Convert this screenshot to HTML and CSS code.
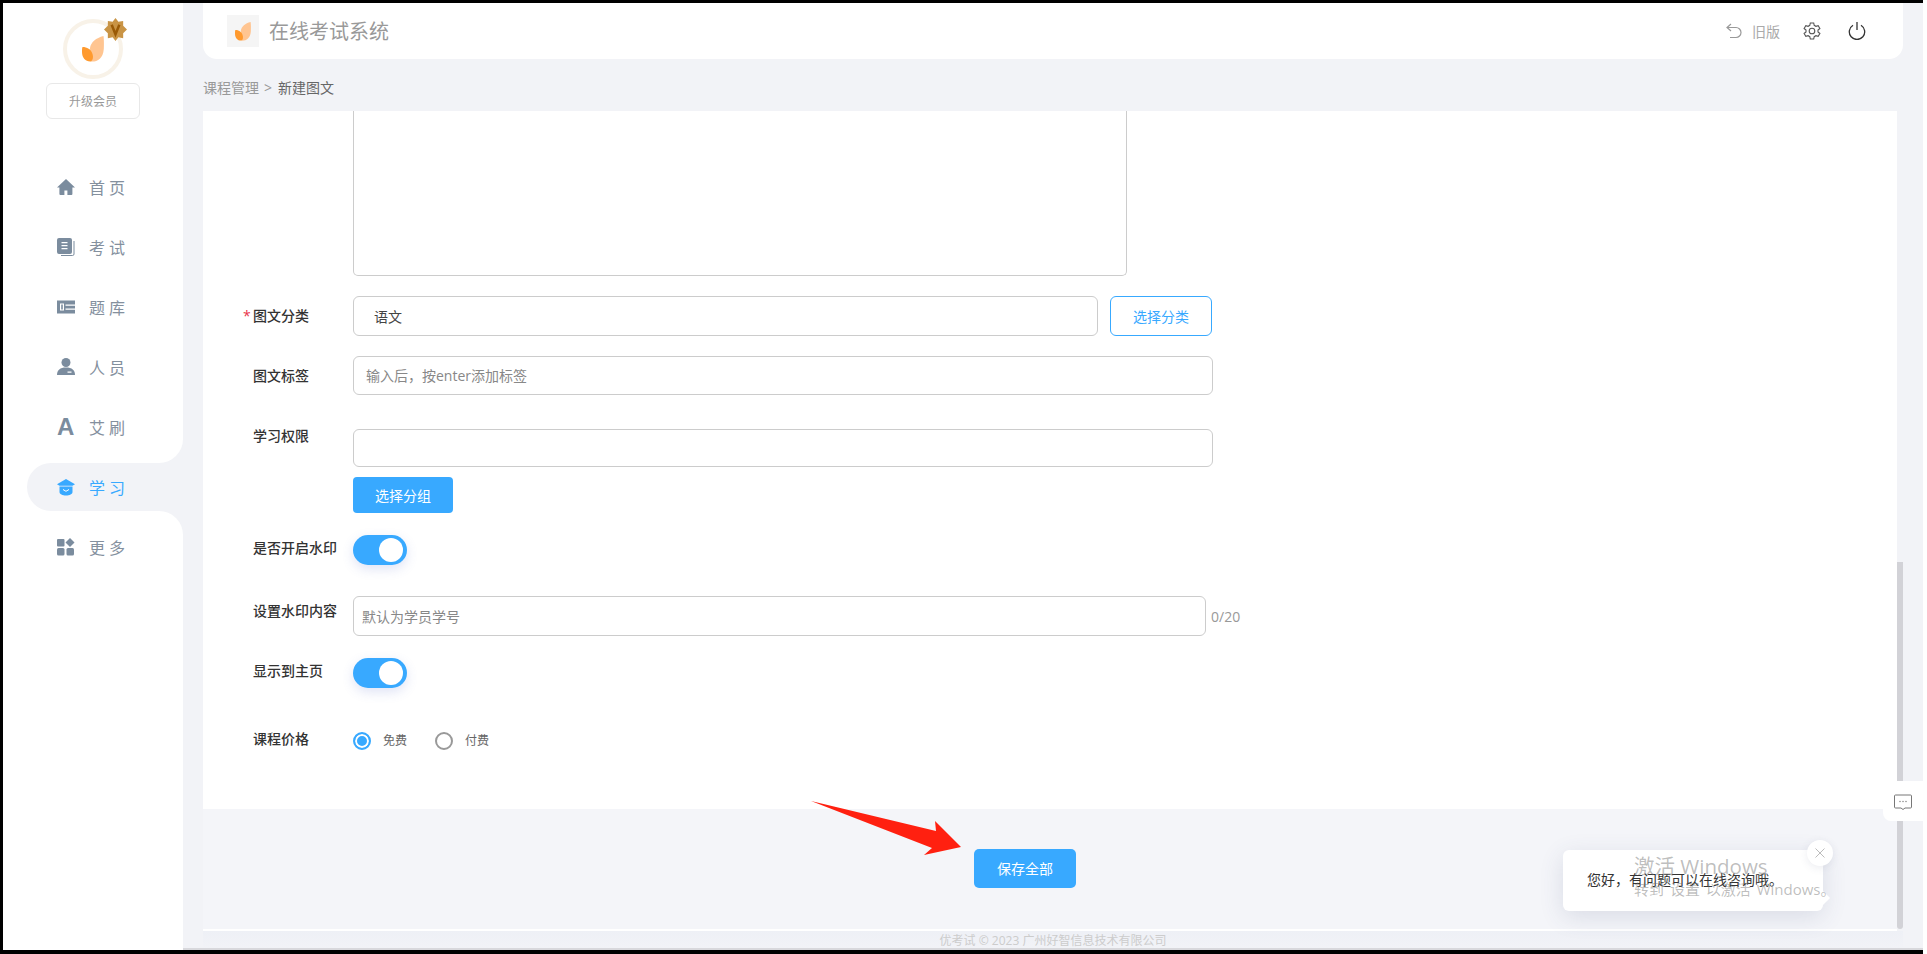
FILE: index.html
```html
<!DOCTYPE html>
<html lang="zh-CN">
<head>
  <meta charset="UTF-8" />
  <meta name="viewport" content="width=device-width, initial-scale=1.0"/>
  <title>在线考试系统 - 新建图文</title>
  <link rel="stylesheet" href="styles.css">
</head>
<body>
<div class="app">

  <aside class="sidebar">
    <div class="side-top">
      <div class="avatar">
        <svg class="leaf-logo" width="22" height="26" viewBox="0 0 22 26">
          <path d="M21.500 0C14 2 9 6 8 12c0 5 2 10 1 13.500 6 .5 12-2.500 12.800-12.500.2-5 .2-9-.3-13z" fill="#ffc591"/>
          <path d="M.5 11c4.500 0 8.500 2 10 7 1 3 .5 6-1.500 7.500-5 .5-9-3.500-9-9.500 0-2 0-4 .5-5z" fill="#ff9a2e"/>
        </svg>
        <svg class="badge" width="23" height="23" viewBox="0 0 24 24">
          <polygon points="12,0 15,4 20,3 20,8 24,12 20,16 20,21 15,20 12,24 9,20 4,21 4,16 0,12 4,8 4,3 9,4" fill="#c99445"/>
          <polyline points="8,7 12,17 16,7" fill="none" stroke="#9a5a06" stroke-width="2.600"/>
        </svg>
      </div>
      <div class="upgrade">升级会员</div>
      <ul class="nav">
        <li class="nav-item">
          <svg class="nav-icon" viewBox="0 0 18 18"><path d="M9 1L0 9.500h2.400V16a1 1 0 0 0 1 1h4v-4.500h3V17h4a1 1 0 0 0 1-1V9.500H18z"/></svg>
          <span>首页</span>
        </li>
        <li class="nav-item">
          <svg class="nav-icon" viewBox="0 0 18 18"><path d="M2 0h11a2 2 0 0 1 2 2v12a2 2 0 0 1-2 2H2a2 2 0 0 1-2-2V2a2 2 0 0 1 2-2zm2.500 4v1.300h6V4zm0 3v1.300h6V7zm0 3v1.300h6V10z" fill-rule="evenodd"/><path d="M17 3v13a1.500 1.500 0 0 1-1.500 1.500H4" fill="none" stroke="#7b8c9e" stroke-width="1"/></svg>
          <span>考试</span>
        </li>
        <li class="nav-item">
          <svg class="nav-icon" viewBox="0 0 18 18"><path d="M0 2.500h18v13H0zm3 3v7h4v-7zm5.500 1v1.200H18V6.500zm0 4V11.700H18v-1.200z" fill-rule="evenodd"/><rect x="4.200" y="6.500" width="1.600" height="5"/></svg>
          <span>题库</span>
        </li>
        <li class="nav-item">
          <svg class="nav-icon" viewBox="0 0 18 18"><circle cx="9" cy="4.500" r="4.500"/><path d="M0 17c0-5 3-7.500 9-7.500s9 2.500 9 7.500zm10.500-3.500v1.200h4v-1.200z" fill-rule="evenodd"/></svg>
          <span>人员</span>
        </li>
        <li class="nav-item">
          <span class="nav-glyph">A</span>
          <span>艾刷</span>
        </li>
      </ul>
    </div>
    <div class="side-active">
      <div class="nav-item active">
        <svg class="nav-icon" viewBox="0 0 18 18"><path d="M9 1L0 6.200l2.500 1.500h13L18 6.200z"/><path d="M2.500 8.500V14c0 2 3 3.500 6.500 3.500s6.500-1.500 6.500-3.500V8.500z"/><path d="M6 11.500l3 1.800 3-1.800" fill="none" stroke="#fff" stroke-width="1"/></svg>
        <span>学习</span>
      </div>
    </div>
    <div class="side-bottom">
      <div class="nav-item">
        <svg class="nav-icon" viewBox="0 0 18 18"><rect x="0" y="1" width="7.500" height="7.500" rx="1"/><rect x="0" y="10" width="7.500" height="7.500" rx="1.500"/><rect x="9.500" y="10" width="7.500" height="7.500" rx="1.500"/><polygon points="13,0 17.500,4.500 13,9 8.500,4.500"/></svg>
        <span>更多</span>
      </div>
    </div>
  </aside>

  <main class="main">
    <header class="topbar">
      <div class="brand-logo">
        <svg width="16" height="19" viewBox="0 0 22 26">
          <path d="M21.500 0C14 2 9 6 8 12c0 5 2 10 1 13.500 6 .5 12-2.500 12.800-12.500.2-5 .2-9-.3-13z" fill="#ffc591"/>
          <path d="M.5 11c4.500 0 8.500 2 10 7 1 3 .5 6-1.500 7.500-5 .5-9-3.500-9-9.500 0-2 0-4 .5-5z" fill="#ff9a2e"/>
        </svg>
      </div>
      <div class="brand-name">在线考试系统</div>
      <div class="top-actions">
        <svg class="back-icon" width="16" height="16" viewBox="0 0 16 16"><path d="M5 1L1 4.500 5 8M1.500 4.500H10a5 5 0 0 1 0 10H4" fill="none" stroke="#999" stroke-width="1.200"/></svg>
        <span class="old-version">旧版</span>
        <svg class="gear-icon" width="18" height="18" viewBox="0 0 18 18" fill="none" stroke="#555" stroke-width="1.100"><path d="M7.300 1h3.400l.5 2.300 1.700 1 2.300-.7 1.700 2.900L15 8v2l1.900 1.500-1.700 2.900-2.300-.7-1.700 1-.5 2.300H7.300l-.5-2.300-1.700-1-2.300.7-1.700-2.900L3 10V8L1.100 6.500l1.700-2.900 2.300.7 1.700-1z"/><circle cx="9" cy="9" r="2.800"/></svg>
        <svg class="power-icon" width="18" height="18" viewBox="0 0 18 18" fill="none" stroke="#333" stroke-width="1.300"><path d="M5 3.200a7.700 7.700 0 1 0 8 0M9 0v8"/></svg>
      </div>
    </header>

    <div class="breadcrumb">
      <span class="crumb-parent">课程管理</span>
      <span class="crumb-sep">&gt;</span>
      <span class="crumb-current">新建图文</span>
    </div>

    <div class="content">
      <div class="pane">
        <form class="card">
          <div class="form-row intro-row">
            <div class="form-label"></div>
            <div class="textarea-box"></div>
          </div>

          <div class="form-row cat-row">
            <div class="form-label"><i class="required">*</i>图文分类</div>
            <div class="field cat-field"><span class="field-value">语文</span></div>
            <button type="button" class="btn-outline">选择分类</button>
          </div>

          <div class="form-row tag-row">
            <div class="form-label">图文标签</div>
            <div class="field wide"><span class="placeholder">输入后，按enter添加标签</span></div>
          </div>

          <div class="form-row perm-row">
            <div class="form-label up">学习权限</div>
            <div class="perm-col">
              <div class="field wide perm-field"></div>
              <button type="button" class="btn-primary group-btn">选择分组</button>
            </div>
          </div>

          <div class="form-row switch-row first-switch">
            <div class="form-label lift">是否开启水印</div>
            <div class="switch"><span class="knob"></span></div>
          </div>

          <div class="form-row mark-row">
            <div class="form-label lift-more">设置水印内容</div>
            <div class="field mark-field"><span class="placeholder">默认为学员学号</span></div>
            <span class="counter">0/20</span>
          </div>

          <div class="form-row switch-row second-switch">
            <div class="form-label lift">显示到主页</div>
            <div class="switch"><span class="knob"></span></div>
          </div>

          <div class="form-row price-row">
            <div class="form-label lift">课程价格</div>
            <span class="radio checked"></span><span class="radio-text">免费</span>
            <span class="radio"></span><span class="radio-text">付费</span>
          </div>
        </form>

        <div class="save-area">
          <button type="button" class="btn-primary save-btn">保存全部</button>
        </div>
      </div>
      <div class="scrollbar"><div class="thumb"></div></div>
    </div>

    <footer class="footer">优考试 © 2023 广州好智信息技术有限公司</footer>
  </main>

  <!-- annotation arrow from the screenshot -->
  <svg class="arrow" width="156" height="60" viewBox="0 0 156 60">
    <polygon points="0,0 125,30 124,20 150,46 113,54 121,47" fill="#ff2010"/>
  </svg>

  <div class="chat-tab">
    <svg width="18" height="17" viewBox="0 0 18 17"><path d="M1.500 1h15a1 1 0 0 1 1 1v11a1 1 0 0 1-1 1H11l-2 1.500L7 14H1.500a1 1 0 0 1-1-1V2a1 1 0 0 1 1-1z" fill="none" stroke="#777" stroke-width="1"/><circle cx="6" cy="7.500" r=".7" fill="#777"/><circle cx="9" cy="7.500" r=".7" fill="#777"/><circle cx="12" cy="7.500" r=".7" fill="#777"/></svg>
  </div>

  <div class="chat-tip">
    您好，有问题可以在线咨询哦。
    <span class="tip-close">
      <svg width="10" height="10" viewBox="0 0 10 10"><path d="M.5.500l9 9M9.500.500l-9 9" stroke="#bbb" stroke-width="1" fill="none"/></svg>
    </span>
  </div>

  <div class="activate">
    <div class="activate-title">激活 Windows</div>
    <div class="activate-sub">转到 设置 以激活 Windows。</div>
  </div>
</div>
</body>
</html>
```

FILE: styles.css
```css
* {
  box-sizing: border-box;
}

html, body {
  height: 100%;
}

body {
  margin: 0;
  background: #fff;
  padding-right: 4px;
  overflow: hidden;
  font-family: "Open Sans", "Noto Sans CJK SC", sans-serif;
  font-size: 14px;
  color: #333;
}

.app {
  display: flex;
  height: 100%;
  background: #f2f3f7;
  border: solid #000;
  border-width: 3px 0 4px 3px;
}

/* sidebar */
.sidebar {
  width: 180px;
  flex-shrink: 0;
  display: flex;
  flex-direction: column;
  background: #f2f3f7;
}

.side-top {
  background: #fff;
  height: 460px;
  border-bottom-right-radius: 24px;
  display: flex;
  flex-direction: column;
  align-items: center;
  padding-top: 16px;
}

.avatar {
  position: relative;
  width: 60px;
  height: 60px;
  flex-shrink: 0;
  border: 4px solid #f8f2e8;
  border-radius: 50%;
  display: flex;
  align-items: center;
  justify-content: center;
}

.badge {
  position: absolute;
  top: -5px;
  right: -8px;
}

.upgrade {
  width: 94px;
  height: 36px;
  margin-top: 4px;
  border: 1px solid #e8e8e8;
  border-radius: 6px;
  font-size: 12px;
  color: #999;
  display: flex;
  align-items: center;
  justify-content: center;
}

.nav {
  list-style: none;
  margin: 38px 0 0;
  padding: 0;
  width: 100%;
}

.nav-item {
  height: 60px;
  display: flex;
  align-items: center;
  padding: 0 0 1px 54px;
  font-size: 16px;
  letter-spacing: 4px;
  color: #84909e;
}

.nav-icon {
  width: 18px;
  height: 18px;
  margin-right: 14px;
  fill: #7b8c9e;
  flex-shrink: 0;
}

.nav-glyph {
  width: 18px;
  margin-right: 14px;
  font-family: "Liberation Sans", sans-serif;
  font-size: 24px;
  font-weight: bold;
  line-height: 18px;
  letter-spacing: 0;
  color: #7b8c9e;
}

.side-active {
  background: #fff;
  height: 48px;
  padding-left: 24px;
}

.nav-item.active {
  height: 48px;
  padding-left: 30px;
  background: #f2f3f7;
  border-radius: 24px 0 0 24px;
  color: #38a9ff;
}

.nav-item.active .nav-icon {
  fill: #38a9ff;
}

.side-bottom {
  flex: 1;
  background: #fff;
  border-top-right-radius: 24px;
  padding-top: 6px;
}

/* main column */
.main {
  flex: 1;
  min-width: 0;
  display: flex;
  flex-direction: column;
  padding: 0 20px 0 20px;
  position: relative;
}

.main::after {
  content: "";
  position: absolute;
  left: 0;
  right: 0;
  bottom: 0;
  height: 2px;
  background: #d8d8dc;
}

.topbar {
  height: 56px;
  flex-shrink: 0;
  display: flex;
  align-items: center;
  background: #fff;
  border-radius: 0 0 14px 14px;
  padding: 0 37px 0 24px;
}

.brand-logo {
  width: 32px;
  height: 32px;
  background: #f5f5f5;
  display: flex;
  align-items: center;
  justify-content: center;
}

.brand-name {
  margin-left: 10px;
  padding-bottom: 2px;
  font-size: 20px;
  color: #999;
}

.top-actions {
  margin-left: auto;
  display: flex;
  align-items: center;
}

.old-version {
  margin-left: 10px;
  color: #aaa;
}

.gear-icon {
  margin-left: 23px;
}

.power-icon {
  margin-left: 27px;
}

.breadcrumb {
  height: 52px;
  flex-shrink: 0;
  display: flex;
  align-items: center;
  padding-top: 4px;
  color: #999;
}

.crumb-sep {
  margin: 0 6px 0 5px;
}

.crumb-current {
  color: #666;
}

.content {
  flex: 1;
  min-height: 0;
  display: flex;
}

.pane {
  flex: 1;
  min-width: 0;
  display: flex;
  flex-direction: column;
}

.card {
  height: 698px;
  flex-shrink: 0;
  background: #fff;
  padding-left: 50px;
}

.form-row {
  display: flex;
  align-items: center;
}

.form-label {
  width: 100px;
  flex-shrink: 0;
  line-height: 20px;
  font-weight: 500;
  color: #333;
}

.form-label.lift {
  padding-bottom: 4px;
}

.form-label.lift-more {
  padding-bottom: 10px;
}

.form-label.up {
  align-self: flex-start;
  margin-top: -3px;
}

.required {
  display: inline-block;
  width: 10px;
  margin-left: -10px;
  font-style: normal;
  color: #e8354a;
}

.textarea-box {
  width: 774px;
  height: 165px;
  border: 1px solid #ccc;
  border-top: none;
  border-radius: 0 0 5px 5px;
}

.field {
  height: 40px;
  border: 1px solid #ccc;
  border-radius: 6px;
  display: flex;
  align-items: center;
  background: #fff;
}

.cat-row {
  margin-top: 20px;
}

.cat-field {
  width: 745px;
  padding-left: 20px;
}

.field-value {
  color: #444;
}

.btn-outline {
  width: 102px;
  height: 40px;
  margin-left: 12px;
  border: 1px solid #38a9ff;
  border-radius: 6px;
  background: #fff;
  color: #38a9ff;
  font: inherit;
}

.tag-row {
  margin-top: 20px;
}

.wide {
  width: 860px;
}

.tag-row .field {
  height: 39px;
  padding: 0 0 2px 12px;
}

.placeholder {
  color: #888;
}

.perm-row {
  margin-top: 34px;
}

.perm-col {
  display: flex;
  flex-direction: column;
  align-items: flex-start;
}

.perm-field {
  height: 38px;
}

.btn-primary {
  border: none;
  border-radius: 4px;
  background: #38a9ff;
  color: #fff;
  font: inherit;
}

.group-btn {
  width: 100px;
  height: 36px;
  margin-top: 10px;
}

.first-switch {
  margin-top: 22px;
}

.second-switch {
  margin-top: 22px;
}

.switch {
  width: 54px;
  height: 30px;
  border-radius: 15px;
  background: #38a9ff;
  padding: 3px 4px 3px 26px;
  box-shadow: 0 4px 12px rgba(80, 100, 200, 0.18);
}

.knob {
  display: block;
  width: 24px;
  height: 24px;
  border-radius: 50%;
  background: #fff;
}

.mark-row {
  margin-top: 31px;
}

.mark-field {
  width: 853px;
  padding-left: 8px;
}

.counter {
  margin-left: 5px;
  color: #999;
}

.price-row {
  margin-top: 41px;
}

.radio {
  width: 18px;
  height: 18px;
  flex-shrink: 0;
  border: 2px solid #999;
  border-radius: 50%;
}

.radio.checked {
  border-color: #38a9ff;
  background: #38a9ff;
  box-shadow: inset 0 0 0 2px #fff;
}

.radio-text {
  width: 52px;
  margin-left: 12px;
  padding-bottom: 2px;
  font-size: 12px;
  color: #666;
}

.save-area {
  flex: 1;
  background: #f4f5f9;
  border-bottom: 2px solid #fff;
  padding: 40px 0 0 771px;
}

.save-btn {
  display: block;
  width: 102px;
  height: 39px;
  padding-bottom: 3px;
  border-radius: 5px;
}

.scrollbar {
  width: 6px;
  padding-top: 451px;
  padding-bottom: 2px;
}

.thumb {
  height: 100%;
  background: #d2d2d7;
  border-radius: 0 0 4px 4px;
}

.footer {
  height: 19px;
  flex-shrink: 0;
  line-height: 19px;
  text-align: center;
  font-size: 12px;
  color: #ccc;
  background: linear-gradient(#eef0f6, #f2f3f7);
}

/* things lying over the page */
.arrow {
  position: absolute;
  left: 811px;
  top: 801px;
}

.chat-tab {
  position: absolute;
  left: 1883px;
  top: 781px;
  width: 40px;
  height: 40px;
  padding-top: 2px;
  background: #fff;
  border-radius: 8px 0 0 8px;
  display: flex;
  align-items: center;
  justify-content: center;
}

.chat-tip {
  position: absolute;
  left: 1563px;
  top: 850px;
  width: 260px;
  height: 61px;
  padding-left: 24px;
  line-height: 60px;
  background: #fff;
  border-radius: 6px;
  color: #333;
  box-shadow: 0 6px 24px rgba(60, 70, 110, 0.14);
}

.chat-tip::after {
  content: "";
  position: absolute;
  right: -5px;
  bottom: 8px;
  width: 10px;
  height: 10px;
  background: #fff;
  transform: rotate(45deg);
}

.tip-close {
  position: absolute;
  left: 244px;
  top: -10px;
  width: 26px;
  height: 26px;
  border-radius: 50%;
  background: #fff;
  box-shadow: 0 2px 8px rgba(60, 70, 110, 0.1);
  display: flex;
  align-items: center;
  justify-content: center;
}

.activate {
  position: absolute;
  left: 1634px;
  top: 853px;
  color: rgba(110, 110, 110, 0.45);
  pointer-events: none;
}

.activate-title {
  font-size: 20.5px;
  line-height: 26px;
}

.activate-sub {
  font-size: 15px;
  line-height: 21px;
  word-spacing: 2px;
}
```
